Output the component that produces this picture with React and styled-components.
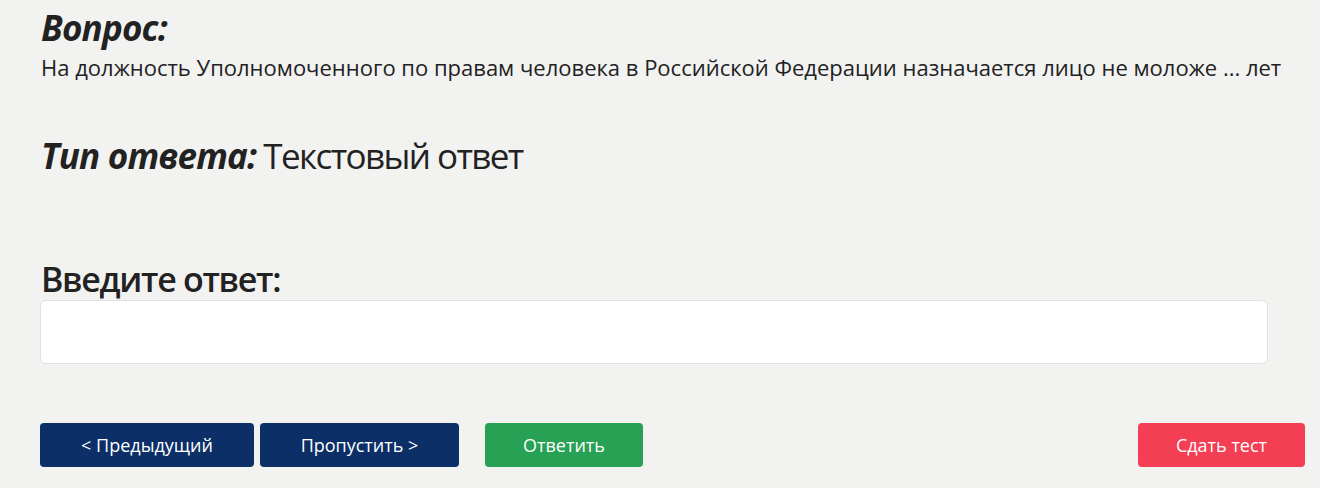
import styled, { createGlobalStyle } from 'styled-components'

const GlobalStyle = createGlobalStyle`
  html, body {
    margin: 0;
    padding: 0;
    background: #f2f2f1;
  }
  body {
    font-family: "Open Sans", "Noto Sans", sans-serif;
    color: #222;
  }
`

function App() {
  return (
    <>
      <GlobalStyle />
      <Page>
        <Title>Вопрос:</Title>
        <Question>
          На должность Уполномоченного по правам человека в Российской Федерации назначается лицо не моложе ... лет
        </Question>

        <AnswerType>
          <em>Тип ответа:</em>Текстовый ответ
        </AnswerType>

        <Label htmlFor="answer">Введите ответ:</Label>
        <AnswerInput id="answer" type="text" />

        <Controls>
          <NavGroup>
            <Button>&lt; Предыдущий</Button>
            <Button $width="199px">Пропустить &gt;</Button>
          </NavGroup>
          <Button $variant="success" $width="158px">Ответить</Button>
          <Spacer />
          <Button $variant="danger" $width="167px">Сдать тест</Button>
        </Controls>
      </Page>
    </>
  )
}

export default App

const Page = styled.div`
  display: flex;
  flex-direction: column;
  padding: 4px 15px 0 41px;
  height: 488px;
  box-sizing: border-box;
`

const Title = styled.h2`
  margin: 0;
  font-size: 35px;
  line-height: 48px;
  font-weight: 700;
  font-style: italic;
  letter-spacing: -0.8px;
`

const Question = styled.p`
  margin: 0;
  font-size: 22px;
  line-height: 30px;
`

const AnswerType = styled.div`
  margin-top: 50px;
  font-size: 35px;
  line-height: 48px;
  letter-spacing: -1.6px;

  em {
    font-weight: 700;
    letter-spacing: -0.8px;
    margin-right: 7px;
  }
`

const Label = styled.label`
  margin-top: 78px;
  font-size: 34px;
  line-height: 42px;
  font-weight: 600;
  letter-spacing: -1.3px;
`

const AnswerInput = styled.input`
  width: 1228px;
  height: 64px;
  margin-left: -1px;
  box-sizing: border-box;
  border: 1px solid #e1e1e1;
  border-radius: 6px;
  background: #fff;
  outline: none;
  padding: 0 14px;
  font: inherit;
  font-size: 18px;
`

const Controls = styled.div`
  display: flex;
  align-items: center;
  margin-top: 59px;
  margin-left: -1px;
`

const NavGroup = styled.div`
  display: flex;
  gap: 6px;
  margin-right: 26px;
`

const Spacer = styled.div`
  flex: 1;
`

const colors = {
  primary: '#0b2f66',
  success: '#27a153',
  danger: '#f43e54',
}

const Button = styled.button`
  width: ${(p) => p.$width || '214px'};
  height: 44px;
  border: none;
  border-radius: 4px;
  background: ${(p) => colors[p.$variant || 'primary']};
  color: #fff;
  font-family: inherit;
  font-size: 18px;
  cursor: pointer;
`
